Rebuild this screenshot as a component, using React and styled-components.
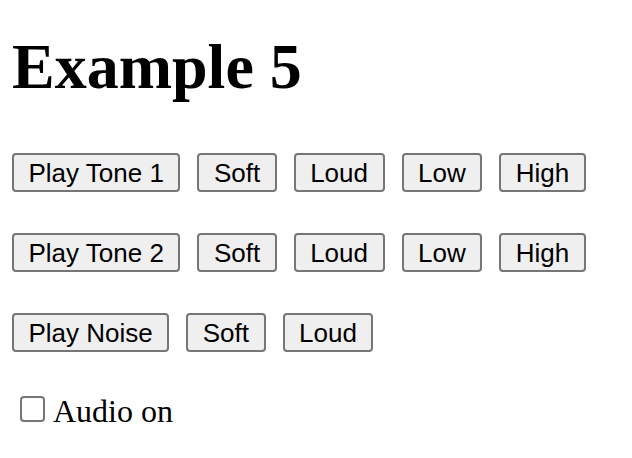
import React from "react";
import styled, { createGlobalStyle } from "styled-components";

const Global = createGlobalStyle`
  html, body { margin: 0; padding: 0; background: #fff; }
  body { font-family: "Liberation Serif", "Times New Roman", serif; color: #000; }
`;

const Page = styled.div`
  display: flex;
  flex-direction: column;
  padding: 31px 12px 20px;
`;

const Title = styled.h1`
  margin: 0;
  font-family: "Liberation Serif", "Times New Roman", serif;
  font-weight: 700;
  font-size: 64px;
  line-height: 71px;
`;

const Rows = styled.div`
  display: flex;
  flex-direction: column;
  gap: 41px;
  margin-top: 51px;
`;

const Row = styled.div`
  display: flex;
  gap: 17px;
`;

const Button = styled.button`
  box-sizing: border-box;
  height: 39px;
  padding: 0 14.5px;
  border: 2px solid #767676;
  border-radius: 4px;
  background: #efefef;
  color: #000;
  font-family: "Liberation Sans", Arial, sans-serif;
  font-size: 26px;
  line-height: 1;
  cursor: pointer;
`;

const Label = styled.label`
  display: flex;
  align-items: flex-start;
  gap: 8px;
  margin-top: 41px;
  padding-left: 8px;
  font-size: 32px;
  line-height: 37px;
`;

const Check = styled.input.attrs({ type: "checkbox" })`
  appearance: none;
  box-sizing: border-box;
  width: 25px;
  height: 26px;
  margin: 3px 0 0;
  border: 2px solid #767676;
  border-radius: 4px;
  background: #fff;
`;

const rows = [
  ["Play Tone 1", "Soft", "Loud", "Low", "High"],
  ["Play Tone 2", "Soft", "Loud", "Low", "High"],
  ["Play Noise", "Soft", "Loud"],
];

export default function App() {
  return (
    <>
      <Global />
      <Page>
        <Title>Example 5</Title>
        <Rows>
          {rows.map((r, i) => (
            <Row key={i}>
              {r.map((t, j) => (
                <Button key={j}>{t}</Button>
              ))}
            </Row>
          ))}
        </Rows>
        <Label>
          <Check />
          Audio on
        </Label>
      </Page>
    </>
  );
}
